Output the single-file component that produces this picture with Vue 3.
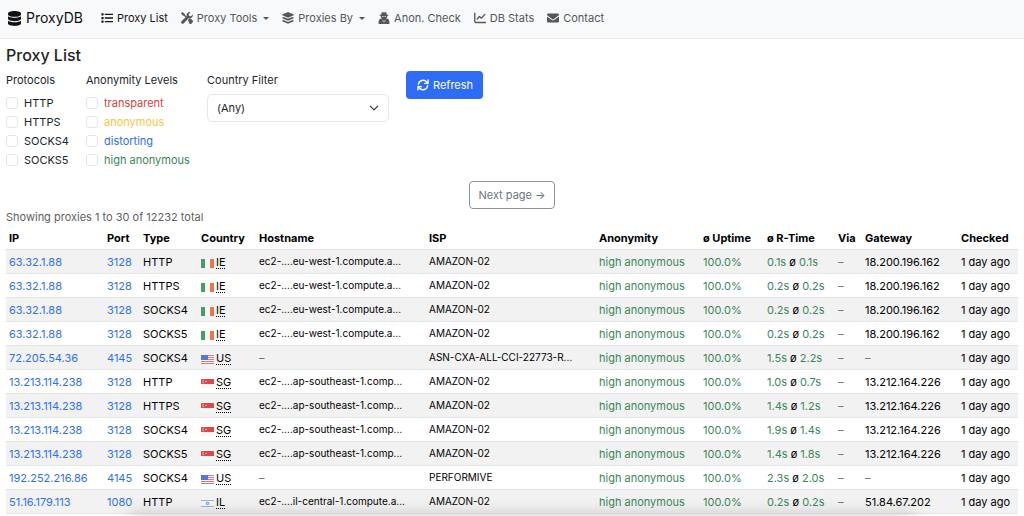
<script setup>
import { ref } from 'vue'

const nav = [
  { label: 'Proxy List', icon: 'list', active: true },
  { label: 'Proxy Tools', icon: 'tools', menu: true },
  { label: 'Proxies By', icon: 'layers', menu: true },
  { label: 'Anon. Check', icon: 'agent' },
  { label: 'DB Stats', icon: 'chart' },
  { label: 'Contact', icon: 'mail' }
]

const protocols = ref([
  { id: 'http', label: 'HTTP', on: false },
  { id: 'https', label: 'HTTPS', on: false },
  { id: 'socks4', label: 'SOCKS4', on: false },
  { id: 'socks5', label: 'SOCKS5', on: false }
])

const levels = ref([
  { id: 'transparent', label: 'transparent', tone: 'red', on: false },
  { id: 'anonymous', label: 'anonymous', tone: 'yellow', on: false },
  { id: 'distorting', label: 'distorting', tone: 'blue', on: false },
  { id: 'high', label: 'high anonymous', tone: 'green', on: false }
])

const country = ref('')

const IE = 'ec2-....eu-west-1.compute.a...'
const SG = 'ec2-....ap-southeast-1.comp...'
const IL = 'ec2-....il-central-1.compute.a...'
const A = 'AMAZON-02'

const rows = [
  ['63.32.1.88', '3128', 'HTTP', 'IE', IE, A, '0.1s', '0.1s', '18.200.196.162'],
  ['63.32.1.88', '3128', 'HTTPS', 'IE', IE, A, '0.2s', '0.2s', '18.200.196.162'],
  ['63.32.1.88', '3128', 'SOCKS4', 'IE', IE, A, '0.2s', '0.2s', '18.200.196.162'],
  ['63.32.1.88', '3128', 'SOCKS5', 'IE', IE, A, '0.2s', '0.2s', '18.200.196.162'],
  ['72.205.54.36', '4145', 'SOCKS4', 'US', '', 'ASN-CXA-ALL-CCI-22773-R...', '1.5s', '2.2s', ''],
  ['13.213.114.238', '3128', 'HTTP', 'SG', SG, A, '1.0s', '0.7s', '13.212.164.226'],
  ['13.213.114.238', '3128', 'HTTPS', 'SG', SG, A, '1.4s', '1.2s', '13.212.164.226'],
  ['13.213.114.238', '3128', 'SOCKS4', 'SG', SG, A, '1.9s', '1.4s', '13.212.164.226'],
  ['13.213.114.238', '3128', 'SOCKS5', 'SG', SG, A, '1.4s', '1.8s', '13.212.164.226'],
  ['192.252.216.86', '4145', 'SOCKS4', 'US', '', 'PERFORMIVE', '2.3s', '2.0s', ''],
  ['51.16.179.113', '1080', 'HTTP', 'IL', IL, A, '0.2s', '0.2s', '51.84.67.202']
].map(([ip, port, type, cc, host, isp, last, avg, gateway]) => ({ ip, port, type, cc, host, isp, last, avg, gateway }))

const names = { IE: 'Ireland', US: 'United States', SG: 'Singapore', IL: 'Israel' }
</script>

<template>
  <div class="page">
    <header class="navbar">
      <a class="brand" href="#">
        <svg class="brand-icon" viewBox="0 0 14 16" aria-hidden="true">
          <path d="M0 2.6C0 1.2 3.1 0 7 0s7 1.2 7 2.6v1C14 5 10.9 6.2 7 6.2S0 5 0 3.6z" />
          <path d="M0 5.7C1.5 6.8 4.1 7.3 7 7.3s5.5-.5 7-1.6v2.7C14 9.8 10.9 11 7 11S0 9.8 0 8.4z" />
          <path d="M0 10.5C1.5 11.6 4.1 12.1 7 12.1s5.5-.5 7-1.6v2.9C14 14.8 10.9 16 7 16s-7-1.2-7-2.6z" />
        </svg>
        <span>ProxyDB</span>
      </a>
      <nav class="links">
        <a v-for="n in nav" :key="n.label" href="#" class="link" :class="{ active: n.active }">
          <svg class="icon" viewBox="0 0 16 16" aria-hidden="true">
            <g v-if="n.icon === 'list'">
              <path d="M5 2.2h11v1.8H5zM5 7.1h11v1.8H5zM5 12h11v1.8H5z" />
              <rect x="0.5" y="1.6" width="3" height="3" rx=".6" />
              <rect x="0.5" y="6.5" width="3" height="3" rx=".6" />
              <rect x="0.5" y="11.4" width="3" height="3" rx=".6" />
            </g>
            <g v-else-if="n.icon === 'tools'">
              <path d="M1.8 0 0 1.8l2.2 3 1.6.3 3 3 1.3-1.3-3-3-.3-1.6z" />
              <path d="M15.7 3.3a4.2 4.2 0 0 1-5.4 4.9l-6.9 7a2 2 0 0 1-2.8-2.8l7-6.9A4.2 4.2 0 0 1 12.7.3L10.3 2.7l.4 2.6 2.6.4z" />
              <path d="m9.3 10.7 1.9-1.9c1-.1 1.9.1 2.6.8l1.7 1.8a1.7 1.7 0 0 1 0 2.4l-1.7 1.7a1.7 1.7 0 0 1-2.4 0z" />
            </g>
            <g v-else-if="n.icon === 'layers'">
              <path d="M8 0 15.6 3.4q.6.4 0 .9L8 7.7.4 4.3q-.6-.5 0-.9z" />
              <path d="m2.2 6.5L8 9.1l5.8-2.6 1.8.9q.6.4 0 .9L8 11.7.4 8.3q-.6-.5 0-.9z" />
              <path d="M2.2 10.6 8 13.2l5.8-2.6 1.8.8q.6.4 0 .9L8 15.8.4 12.3q-.6-.5 0-.9z" />
            </g>
            <g v-else-if="n.icon === 'agent'">
              <path d="M5.7 0Q6.4 0 8 .7 9.6 0 10.3 0q.8.2 1.6 3.5h2.1v1.4h-1.6q.1 3.1-1.7 4.2h2.3q1.9 1 2.2 3.4V16H.8v-3.500Q1.1 10.1 3 9.100h2.3Q3.5 8 3.6 4.900H2V3.500h2.1Q4.9.2 5.7 0z" />
              <path class="hole" d="M5.2 5.500h2.200v1.2H5.600zM8.600 5.500h2.200l-.4 1.2H8.600zM6.200 10.300l1.200 1.300-.6 3zM9.800 10.300l-1.200 1.300.6 3z" />
            </g>
            <g v-else-if="n.icon === 'chart'" class="stroked">
              <path d="M1 1.500v10.800q0 1.700 1.700 1.700H15.300" />
              <path d="m4.300 9.300 3-3.400 2.600 2.300 4.600-5" />
            </g>
            <g v-else>
              <path d="M1.500 2h13Q16 2 16 3.600q0 .7-.7 1.200L8.900 9.600q-.9.6-1.800 0L.7 4.800Q0 4.300 0 3.600 0 2 1.500 2z" />
              <path d="m0 5.900 6.400 4.800q1.600 1.100 3.200 0L16 5.900V12.200Q16 14 14.200 14H1.800Q0 14 0 12.200z" />
            </g>
          </svg>
          <span>{{ n.label }}</span>
          <i v-if="n.menu" class="caret"></i>
        </a>
      </nav>
    </header>

    <main class="content">
      <h1>Proxy List</h1>

      <form class="filters" @submit.prevent>
        <fieldset class="protocols">
          <legend>Protocols</legend>
          <label v-for="p in protocols" :key="p.id" class="check">
            <input v-model="p.on" type="checkbox" /><span>{{ p.label }}</span>
          </label>
        </fieldset>
        <fieldset class="levels">
          <legend>Anonymity Levels</legend>
          <label v-for="l in levels" :key="l.id" class="check">
            <input v-model="l.on" type="checkbox" /><span :class="l.tone">{{ l.label }}</span>
          </label>
        </fieldset>
        <div class="country">
          <label for="country">Country Filter</label>
          <div class="select-wrap">
            <select id="country" v-model="country">
              <option value="">(Any)</option>
              <option v-for="(name, code) in names" :key="code" :value="code">{{ name }}</option>
            </select>
            <svg class="chevron" viewBox="0 0 16 16" aria-hidden="true"><path d="m2 5 6 6 6-6" /></svg>
          </div>
        </div>
        <button class="refresh" type="submit">
          <svg viewBox="0 0 16 16" aria-hidden="true">
            <path d="M1.8 7.3A6.3 6.3 0 0 1 12.9 4L14 5.2M14.2 8.7A6.3 6.3 0 0 1 3.1 12L2 10.8" />
            <path d="M14.8 1.2v4.600h-4.600M1.200 14.800v-4.600h4.600" />
          </svg>
          <span>Refresh</span>
        </button>
      </form>

      <div class="pager"><button type="button" class="next">Next page →</button></div>

      <p class="summary">Showing proxies 1 to 30 of 12232 total</p>

      <table>
        <colgroup>
          <col class="c-ip" /><col class="c-port" /><col class="c-type" /><col class="c-country" />
          <col /><col /><col class="c-anon" /><col class="c-up" /><col class="c-rt" />
          <col class="c-via" /><col class="c-gw" /><col class="c-checked" />
        </colgroup>
        <thead>
          <tr>
            <th>IP</th><th>Port</th><th>Type</th><th>Country</th><th>Hostname</th><th>ISP</th>
            <th>Anonymity</th><th>ø Uptime</th><th>ø R-Time</th><th>Via</th><th>Gateway</th><th>Checked</th>
          </tr>
        </thead>
        <tbody>
          <tr v-for="(r, i) in rows" :key="i">
            <td><a href="#">{{ r.ip }}</a></td>
            <td><a href="#">{{ r.port }}</a></td>
            <td>{{ r.type }}</td>
            <td>
              <span class="place">
                <svg class="flag" viewBox="0 0 13 9" aria-hidden="true">
                  <rect width="13" height="9" fill="#f6f6f6" />
                  <g v-if="r.cc === 'IE'">
                    <rect width="4" height="9" fill="#4a9c68" /><rect x="9" width="4" height="9" fill="#ec7650" />
                  </g>
                  <g v-else-if="r.cc === 'US'">
                    <path d="M0 .5h13M0 2.500h13M0 4.500h13M0 6.500h13M0 8.500h13" stroke="#e8777a" />
                    <rect width="7" height="5" fill="#5577dc" />
                  </g>
                  <g v-else-if="r.cc === 'SG'">
                    <rect width="13" height="5" fill="#dc4848" />
                    <path d="M3 1a1.500 1.500 0 1 0 0 3M4 2.500h2" stroke="#f5c5c5" fill="none" stroke-width=".8" />
                  </g>
                  <g v-else>
                    <path d="M0 1.500h13M0 7.500h13" stroke="#8fb4ee" />
                    <path d="m6.500 2.700 1.500 2.500H5zM6.500 6.200 5 3.700h3z" stroke="#6d9ae6" fill="none" stroke-width=".6" />
                  </g>
                </svg>
                <abbr :title="names[r.cc]">{{ r.cc }}</abbr>
              </span>
            </td>
            <td><span v-if="r.host" class="small">{{ r.host }}</span><span v-else class="none">–</span></td>
            <td><span class="small">{{ r.isp }}</span></td>
            <td class="green">high anonymous</td>
            <td class="green">100.0%</td>
            <td><span class="green">{{ r.last }}</span> ø <span class="green">{{ r.avg }}</span></td>
            <td class="none">–</td>
            <td :class="{ none: !r.gateway }">{{ r.gateway || '–' }}</td>
            <td>1 day ago</td>
          </tr>
        </tbody>
      </table>
    </main>
    <div class="edge-shade"></div>
  </div>
</template>

<style>
body { background: #fff; overflow: hidden; }
</style>

<style scoped>
.page { font: 11px/18px Inter, "Liberation Sans", sans-serif; color: #212529; }
a { color: #2f70f5; text-decoration: none; }
.navbar { display: flex; align-items: center; gap: 18px; height: 39px; padding: 0 6px 2px 8px; background: #f8f9fb; border-bottom: 1px solid #e9eeee; box-sizing: border-box; }
.brand { display: flex; align-items: center; gap: 5px; color: #111; font-size: 14px; }
.brand-icon { width: 13px; height: 15px; }
.links { display: flex; gap: 13px; }
.link { display: flex; align-items: center; gap: 4px; color: #555759; white-space: nowrap; }
.link.active { color: #151617; }
.icon { width: 12px; height: 12px; }
svg { display: block; flex: none; fill: currentColor; }
.hole { fill: #f8f9fb; }
.stroked { fill: none; stroke: currentColor; stroke-width: 1.8; stroke-linecap: round; stroke-linejoin: round; }
.caret { margin-left: 2px; border: 3px solid transparent; border-top-color: currentColor; border-bottom: 0; }
.content { padding: 5px 6px 0; }
h1 { margin: 0; font-size: 16px; line-height: 22px; font-weight: 500; }
.filters { display: flex; align-items: flex-start; padding-top: 5px; }
fieldset { margin: 0; padding: 0; border: 0; min-width: 0; }
legend, .country > label { display: block; padding: 0; line-height: 18px; }
legend { margin-bottom: 4px; }
.country > label { margin-bottom: 5px; }
.protocols { width: 80px; }
.levels { width: 121px; }
.check { display: flex; align-items: center; gap: 6px; height: 19px; white-space: nowrap; }
.check input { appearance: none; margin: 0; width: 12px; height: 12px; border: 1px solid #e1e6e8; border-radius: 3px; background: #fff; box-sizing: border-box; flex: none; }
.check input:checked { background: #2f6cf6; }
.red { color: #d2453f; }
.yellow { color: #fbc547; }
.blue { color: #2f6fec; }
.green { color: #3a875b; }
.country { width: 182px; }
.select-wrap { position: relative; }
select { appearance: none; display: block; width: 100%; height: 28px; padding: 0 9px; border: 1px solid #e3e8e8; border-radius: 5px; background: #fff; color: inherit; font: inherit; box-sizing: border-box; }
.chevron { position: absolute; right: 10px; top: 9px; width: 10px; height: 10px; pointer-events: none; fill: none; stroke: #343a40; stroke-width: 2; stroke-linecap: round; stroke-linejoin: round; }
.refresh { display: flex; align-items: center; gap: 4px; height: 28px; margin-left: 17px; padding: 0 10px 0 11px; border: 0; border-radius: 4px; background: #2f6cf6; color: #fff; font: inherit; }
.refresh svg { width: 12px; height: 12px; fill: none; stroke: currentColor; stroke-width: 1.8; stroke-linecap: round; stroke-linejoin: round; }
.pager { display: flex; justify-content: center; padding: 12px 0 0; }
.next { height: 28px; padding: 0 8px; border: 1px solid #8b929b; border-radius: 4px; background: #fff; color: #6c757d; font: inherit; }
.summary { margin: 0; color: #5f6163; line-height: 17px; }
table { width: 100%; table-layout: fixed; border-collapse: separate; border-spacing: 0; color: #000; }
th, td { padding: 4px 3px 2px; line-height: 17px; border-bottom: 1px solid #e3e6e7; text-align: left; vertical-align: top; white-space: nowrap; }
th { font-weight: 700; }
tbody tr:nth-child(odd) td { background: #f2f2f2; }
.c-ip { width: 98px; }
.c-port { width: 36px; }
.c-type { width: 58px; }
.c-country { width: 58px; }
.c-anon { width: 104px; }
.c-up { width: 64px; }
.c-rt { width: 71px; }
.c-via { width: 27px; }
.c-gw { width: 96px; }
.c-checked { width: 60px; }
.place { display: flex; align-items: center; gap: 2px; }
.flag { width: 13px; height: 9px; margin-top: 2px; }
abbr { line-height: 17px; text-decoration: underline dotted; text-underline-offset: 2px; }
.small { display: block; font-size: 10px; line-height: 14px; }
.none { color: #6c757d; }
.edge-shade { position: fixed; left: 13%; right: 11%; bottom: -12px; height: 8px; box-shadow: 0 0 18px 4px rgba(0, 0, 0, .22); pointer-events: none; }
</style>
